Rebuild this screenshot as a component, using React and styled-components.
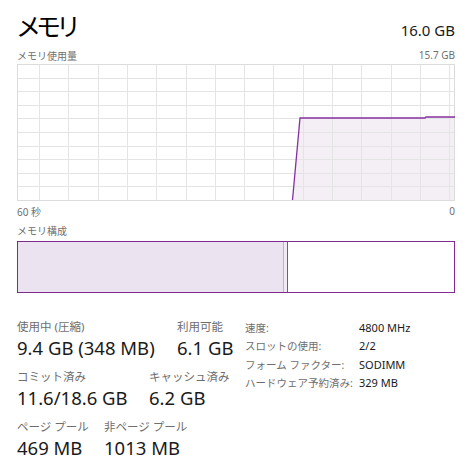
import React from 'react';
import styled, { createGlobalStyle } from 'styled-components';

const GlobalStyle = createGlobalStyle`
  html, body {
    margin: 0;
    padding: 0;
    background: #fff;
  }
  body {
    font-family: "Noto Sans", "Noto Sans CJK JP", sans-serif;
    color: #1a1a1a;
  }
`;

const Page = styled.div`
  width: 471px;
  height: 467px;
  box-sizing: border-box;
  padding: 6px 16px 0 17px;
  overflow: hidden;
`;

const Header = styled.div`
  display: flex;
  justify-content: space-between;
  align-items: baseline;
`;

const Title = styled.h1`
  margin: 0 0 0 -1px;
  font-family: "Noto Sans CJK JP", sans-serif;
  font-weight: 400;
  font-size: 25px;
  letter-spacing: -5px;
  line-height: 38px;
  color: #000;
`;

const Total = styled.span`
  font-size: 15px;
  color: #1a1a1a;
`;

const Caption = styled.div`
  display: flex;
  justify-content: space-between;
  align-items: center;
  font-family: "Noto Sans", "Noto Sans CJK JP", sans-serif;
  font-size: 10px;
  color: #707070;
  height: 16px;
  margin-top: ${(p) => p.$top || 0}px;
`;

const ChartBox = styled.div`
  width: 438px;
  height: 137px;
  margin-top: 1px;
`;

const CompBar = styled.div`
  display: flex;
  width: 438px;
  height: 52px;
  box-sizing: border-box;
  border: 1px solid #7d2b8f;
  margin-top: 3px;
`;

const CompUsed = styled.div`
  width: ${(p) => p.$w}px;
  background: #ece3f0;
`;

const CompModified = styled.div`
  width: 3px;
  background: #f1e9f3;
  border-left: 1px solid #c8acd2;
  border-right: 1px solid #8d4a9c;
`;

const CompFree = styled.div`
  flex: 1;
  background: #fff;
`;

const Stats = styled.div`
  display: flex;
  margin-top: 26px;
`;

const LeftStats = styled.div`
  display: flex;
  flex-direction: column;
  gap: 8px;
  width: 228px;
`;

const StatRow = styled.div`
  display: flex;
`;

const Stat = styled.div`
  display: flex;
  flex-direction: column;
  width: ${(p) => (p.$w ? `${p.$w}px` : 'auto')};
  flex-shrink: 0;
`;

const StatLabel = styled.span`
  font-size: 11.5px;
  color: #6e6e6e;
  line-height: 16px;
  white-space: nowrap;
`;

const StatValue = styled.span`
  font-size: 18.5px;
  color: #1a1a1a;
  line-height: 26px;
  white-space: nowrap;
`;

const Props = styled.div`
  display: grid;
  grid-template-columns: 114px auto;
  align-content: start;
`;

const PropLabel = styled.span`
  font-size: 10.5px;
  color: #6e6e6e;
  line-height: 18.3px;
  white-space: nowrap;
`;

const PropValue = styled.span`
  font-size: 11px;
  color: #1a1a1a;
  line-height: 18.3px;
`;

const W = 438;
const H = 136;

function UsageChart() {
  const cols = [];
  for (let x = 22; x < W; x += 29.3) cols.push(Math.round(x) + 0.5);
  const rows = [];
  for (let i = 1; i < 10; i++) rows.push(Math.round((H / 10) * i) + 0.5);
  const line = 'M275.5,136 L283,54 L408,54 L409,53 L438,53';
  const area = 'M275.5,136 L283,54 L408,54 L409,53 L438,53 L438,136 Z';
  return (
    <svg width={W} height={H + 1} viewBox={`0 0 ${W} ${H + 1}`}>
      <path d={area} fill="#f3eff5" />
      {cols.map((x) => (
        <line key={'c' + x} x1={x} y1={0} x2={x} y2={H} stroke="#e4e4e4" strokeWidth="1" />
      ))}
      {rows.map((y) => (
        <line key={'r' + y} x1={0} y1={y} x2={W} y2={y} stroke="#e4e4e4" strokeWidth="1" />
      ))}
      <rect x="0.5" y="0.5" width={W - 1} height={H} fill="none" stroke="#dcdcdc" strokeWidth="1" />
      <path d={line} fill="none" stroke="#8431a0" strokeWidth="1.3" />
    </svg>
  );
}

export default function App() {
  return (
    <Page>
      <GlobalStyle />
      <Header>
        <Title>メモリ</Title>
        <Total>16.0 GB</Total>
      </Header>
      <Caption $top={3}>
        <span>メモリ使用量</span>
        <span>15.7 GB</span>
      </Caption>
      <ChartBox>
        <UsageChart />
      </ChartBox>
      <Caption $top={2}>
        <span>60 秒</span>
        <span>0</span>
      </Caption>
      <Caption $top={3}>
        <span>メモリ構成</span>
      </Caption>
      <CompBar>
        <CompUsed $w={265} />
        <CompModified />
        <CompFree />
      </CompBar>
      <Stats>
        <LeftStats>
          <StatRow>
            <Stat $w={160}>
              <StatLabel>使用中 (圧縮)</StatLabel>
              <StatValue>9.4 GB (348 MB)</StatValue>
            </Stat>
            <Stat>
              <StatLabel>利用可能</StatLabel>
              <StatValue>6.1 GB</StatValue>
            </Stat>
          </StatRow>
          <StatRow>
            <Stat $w={132}>
              <StatLabel>コミット済み</StatLabel>
              <StatValue>11.6/18.6 GB</StatValue>
            </Stat>
            <Stat>
              <StatLabel>キャッシュ済み</StatLabel>
              <StatValue>6.2 GB</StatValue>
            </Stat>
          </StatRow>
          <StatRow>
            <Stat $w={87}>
              <StatLabel>ページ プール</StatLabel>
              <StatValue>469 MB</StatValue>
            </Stat>
            <Stat>
              <StatLabel>非ページ プール</StatLabel>
              <StatValue>1013 MB</StatValue>
            </Stat>
          </StatRow>
        </LeftStats>
        <Props>
          <PropLabel>速度:</PropLabel>
          <PropValue>4800 MHz</PropValue>
          <PropLabel>スロットの使用:</PropLabel>
          <PropValue>2/2</PropValue>
          <PropLabel>フォーム ファクター:</PropLabel>
          <PropValue>SODIMM</PropValue>
          <PropLabel>ハードウェア予約済み:</PropLabel>
          <PropValue>329 MB</PropValue>
        </Props>
      </Stats>
    </Page>
  );
}
